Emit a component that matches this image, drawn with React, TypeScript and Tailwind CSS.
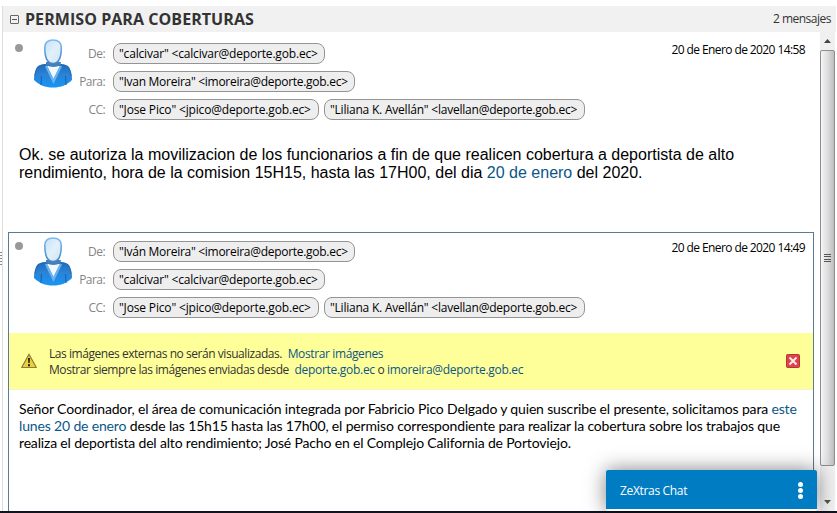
import type { ReactNode } from "react";

const UI = "font-['Open_Sans','Noto_Sans',sans-serif]";

function Avatar({ id }: { id: string }) {
  return (
    <svg width="40" height="49" viewBox="0 0 40 49" className="block shrink-0">
      <defs>
        <linearGradient id={id + "b"} x1="0" y1="0" x2="0" y2="1">
          <stop offset="0" stopColor="#1e6cbe" />
          <stop offset="0.45" stopColor="#2b82d6" />
          <stop offset="1" stopColor="#1696f4" />
        </linearGradient>
        <linearGradient id={id + "h"} x1="0" y1="0" x2="1" y2="1">
          <stop offset="0" stopColor="#c6e1f8" />
          <stop offset="0.5" stopColor="#e2f0fa" />
          <stop offset="1" stopColor="#cde5f5" />
        </linearGradient>
        <linearGradient id={id + "s"} x1="0" y1="0" x2="0" y2="1">
          <stop offset="0" stopColor="#7dbcf6" />
          <stop offset="1" stopColor="#4a86c2" />
        </linearGradient>
      </defs>
      <path d="M12 25 C7 25.500 4.500 26.500 3 30 C1.500 33.500 1 37 1 41 C6 46 12 48.500 20 48.500 C28 48.500 34 46 39 41 C39 37 38.500 33.500 37 30 C35.500 26.500 33 25.500 28 25Z" fill={`url(#${id}b)`} />
      <path d="M2 37 C2.500 33 3.200 30.500 4.800 28.500 C6.500 26.500 9.500 26 13 25.800 M38 37 C37.500 33 36.800 30.500 35.200 28.500 C33.500 26.500 30.500 26 27 25.800" fill="none" stroke="#2769ab" strokeWidth="1" />
      <path d="M14 27 H27 L20.500 40Z" fill="#f3f8fd" />
      <path d="M13 27 L20.500 42.500 L28 27" fill="none" stroke="#69b3f0" strokeWidth="2.200" />
      <path d="M8.500 37 L8 46 M32.500 37 L33 46" stroke="#1a63b3" strokeWidth="1.100" />
      <path d="M13 23 H28 L27.500 26 C23 28.500 18 28.500 13 26Z" fill="#4180bd" />
      <path d="M20 1 C14.800 1 11.800 3.600 11.800 8.800 C11.800 17 13.500 24.500 20 24.500 C26.500 24.500 28.300 17 28.300 8.800 C28.300 3.600 25.300 1 20 1Z" fill={`url(#${id}h)`} stroke={`url(#${id}s)`} strokeWidth="1.600" />
    </svg>
  );
}

function Chip({ className, children }: { className: string; children: ReactNode }) {
  return (
    <span className={`flex h-[21px] items-center whitespace-nowrap rounded-[8px] border border-[#949494] bg-[#eeeeee] pl-[5px] text-[12px] leading-[18px] text-black ${className}`}>
      {children}
    </span>
  );
}

function Row({ label, children }: { label: string; children: ReactNode }) {
  return (
    <div className="flex h-[21px] items-center">
      <span className="w-[32px] shrink-0 whitespace-nowrap text-right text-[12px] leading-[18px] tracking-[-0.55px] text-[#858585]">
        {label}
      </span>
      <div className="ml-[8px] flex gap-[5px]">{children}</div>
    </div>
  );
}

const Calcivar = () => <Chip className="w-[212px] tracking-[-0.18px]">"calcivar" &lt;calcivar@deporte.gob.ec&gt;</Chip>;

const Copies = () => (
  <>
    <Chip className="w-[206px] tracking-[-0.16px]">"Jose Pico" &lt;jpico@deporte.gob.ec&gt;</Chip>
    <Chip className="w-[261px] tracking-[-0.22px]">"Liliana K. Avellán" &lt;lavellan@deporte.gob.ec&gt;</Chip>
  </>
);

function Head({ id, time, children }: { id: string; time: string; children: ReactNode }) {
  return (
    <div className="flex items-start">
      <span className="mt-[5px] h-2 w-2 shrink-0 rounded-full bg-[#999999]" />
      <div className="ml-[10px]"><Avatar id={id} /></div>
      <div className="mt-[4px] flex flex-col gap-[7px]">{children}</div>
      <span className="ml-auto mt-[2px] whitespace-nowrap text-[12px] leading-[18px] tracking-[-0.6px] text-black">
        20 de Enero de 2020 {time}
      </span>
    </div>
  );
}

function Scrollbar() {
  return (
    <div className="flex w-[15px] shrink-0 flex-col bg-[#f0f0f0]">
      <div className="flex h-[18px] items-center justify-center">
        <svg width="7" height="4" viewBox="0 0 7 4"><path d="M3.500 0 L7 4 H0Z" fill="#444" /></svg>
      </div>
      <div className="flex h-[416px] items-center justify-center rounded-[2px] border border-[#8e8e8e] bg-linear-to-r from-[#f5f5f5] via-[#dedee0] to-[#bdbdc0]">
        <div className="flex h-[8px] w-[7px] flex-col justify-between">
          <i className="h-px bg-[#555]" /><i className="h-px bg-[#555]" /><i className="h-px bg-[#555]" /><i className="h-px bg-[#555]" />
        </div>
      </div>
      <div className="flex flex-1 items-end justify-center pb-[7px]">
        <svg width="7" height="4" viewBox="0 0 7 4"><path d="M0 0 H7 L3.500 4Z" fill="#555" /></svg>
      </div>
    </div>
  );
}

export default function App() {
  return (
    <div className={`relative flex h-[513px] w-[837px] flex-col overflow-hidden bg-white pt-[6px] ${UI}`}>
      <div className="flex min-h-0 flex-1">
        <div className="flex w-[3px] shrink-0 flex-col items-start border-r border-[#dddddd] pt-[246px]">
          <div className="flex h-[13px] w-[2px] flex-col justify-between">
            <i className="h-px w-[2px] bg-[#888]" /><i className="h-px w-[2px] bg-[#888]" /><i className="h-px w-[2px] bg-[#888]" /><i className="h-px w-[2px] bg-[#888]" /><i className="h-px w-[2px] bg-[#888]" />
          </div>
        </div>
        <div className="flex min-w-0 flex-1 flex-col">
          <header className="mr-px flex h-[26px] shrink-0 items-center bg-[#f1f1f1] pl-[7px] pr-[5px]">
            <span className="flex h-[9px] w-[9px] shrink-0 items-center justify-center rounded-[1px] border border-[#666]">
              <i className="h-px w-[5px] bg-[#555]" />
            </span>
            <h1 className="ml-[6px] whitespace-nowrap text-[16px] font-bold leading-[24px] tracking-[0.06px] text-[#333333]">PERMISO PARA COBERTURAS</h1>
            <span className="ml-auto whitespace-nowrap text-[12px] tracking-[-0.5px] text-[#333]">2 mensajes</span>
          </header>
          <div className="flex min-h-0 flex-1">
            <main className="flex w-[817px] shrink-0 flex-col">
              <article className="h-[200px] shrink-0 pl-[12px] pr-[15px] pt-[7px]">
                <Head id="a" time="14:58">
                  <Row label="De:"><Calcivar /></Row>
                  <Row label="Para:"><Chip className="w-[242px] tracking-[-0.28px]">"Ivan Moreira" &lt;imoreira@deporte.gob.ec&gt;</Chip></Row>
                  <Row label="CC:"><Copies /></Row>
                </Head>
                <p className="ml-[4px] mt-[26px] whitespace-nowrap font-['Liberation_Sans',Arial,sans-serif] text-[16px] leading-[18px] text-black">
                  Ok. se autoriza la movilizacion de los funcionarios a fin de que realicen cobertura a deportista de alto
                  <br />
                  rendimiento, hora de la comision 15H15, hasta las 17H00, del dia <span className="text-[#0b5687]">20 de enero</span> del 2020.
                </p>
              </article>
              <article className="ml-[5px] flex w-[806px] flex-1 flex-col border border-b-0 border-[#5b7a94]">
                <div className="h-[100px] shrink-0 pl-[6px] pr-[8px] pt-[4px]">
                  <Head id="c" time="14:49">
                    <Row label="De:"><Chip className="w-[242px] tracking-[-0.28px]">"Iván Moreira" &lt;imoreira@deporte.gob.ec&gt;</Chip></Row>
                    <Row label="Para:"><Calcivar /></Row>
                    <Row label="CC:"><Copies /></Row>
                  </Head>
                </div>
                <div className="flex h-[57px] shrink-0 items-center border-b border-[#f3f3cf] bg-[#ffff99] pl-[12px] pr-[13px]">
                  <svg width="16" height="16" viewBox="0 0 16 16" className="shrink-0">
                    <path d="M8 1.200 L15.300 14.500 H0.700Z" fill="#efcd3c" stroke="#8a7d35" strokeWidth="1.200" strokeLinejoin="round" />
                    <path d="M7 5 H9 L8.700 10 H7.300Z M7 11.300 H9 V13.200 H7Z" fill="#222" />
                  </svg>
                  <div className="ml-[12px] mt-[2px] whitespace-nowrap text-[12px] leading-[16px] text-[#333]">
                    <div className="tracking-[-0.45px]">Las imágenes externas no serán visualizadas. <span className="ml-[3px] tracking-[-0.37px] text-[#0b5687]">Mostrar imágenes</span></div>
                    <div className="tracking-[-0.43px]">Mostrar siempre las imágenes enviadas desde <span className="ml-[3px] tracking-[-0.3px] text-[#0b5687]">deporte.gob.ec</span> o <span className="tracking-[-0.28px] text-[#0b5687]">imoreira@deporte.gob.ec</span></div>
                  </div>
                  <svg width="14" height="14" viewBox="0 0 14 14" className="ml-auto shrink-0">
                    <rect x="0.500" y="0.500" width="13" height="13" rx="1" fill="#dc4448" stroke="#b8343a" />
                    <path d="M3.500 3.500 L10.500 10.500 M10.500 3.500 L3.500 10.500" stroke="#fbeaea" strokeWidth="2" />
                  </svg>
                </div>
                <p className="ml-[10px] mt-[10px] whitespace-nowrap font-[Lato,sans-serif] text-[14px] leading-[17px] text-black">
                  <span className="block tracking-[-0.163px]">Señor Coordinador, el área de comunicación integrada por Fabricio Pico Delgado y quien suscribe el presente, solicitamos para <span className="text-[#0b5687]">este</span></span>
                  <span className="block tracking-[-0.156px]"><span className="text-[#0b5687]">lunes 20 de enero</span> desde las 15h15 hasta las 17h00, el permiso correspondiente para realizar la cobertura sobre los trabajos que</span>
                  <span className="block tracking-[-0.165px]">realiza el deportista del alto rendimiento; José Pacho en el Complejo California de Portoviejo.</span>
                </p>
              </article>
            </main>
            <Scrollbar />
          </div>
        </div>
      </div>
      <div className="h-[2px] shrink-0 bg-[#11131f]" />
      <div className="absolute left-[606px] top-[470px] flex h-[41px] w-[211px] flex-col rounded-[2px] bg-white shadow-[0_0_20px_rgba(0,0,0,0.5)]">
        <div className="flex h-[39px] items-center rounded-t-[2px] bg-[#007cc3] pl-[14px] pr-[14px] text-white">
          <span className="mt-[3px] text-[12px] tracking-[-0.33px]">ZeXtras Chat</span>
          <span className="ml-auto mt-[2px] flex flex-col gap-px">
            <i className="h-[5px] w-[5px] rounded-full bg-white" /><i className="h-[5px] w-[5px] rounded-full bg-white" /><i className="h-[5px] w-[5px] rounded-full bg-white" />
          </span>
        </div>
      </div>
    </div>
  );
}
